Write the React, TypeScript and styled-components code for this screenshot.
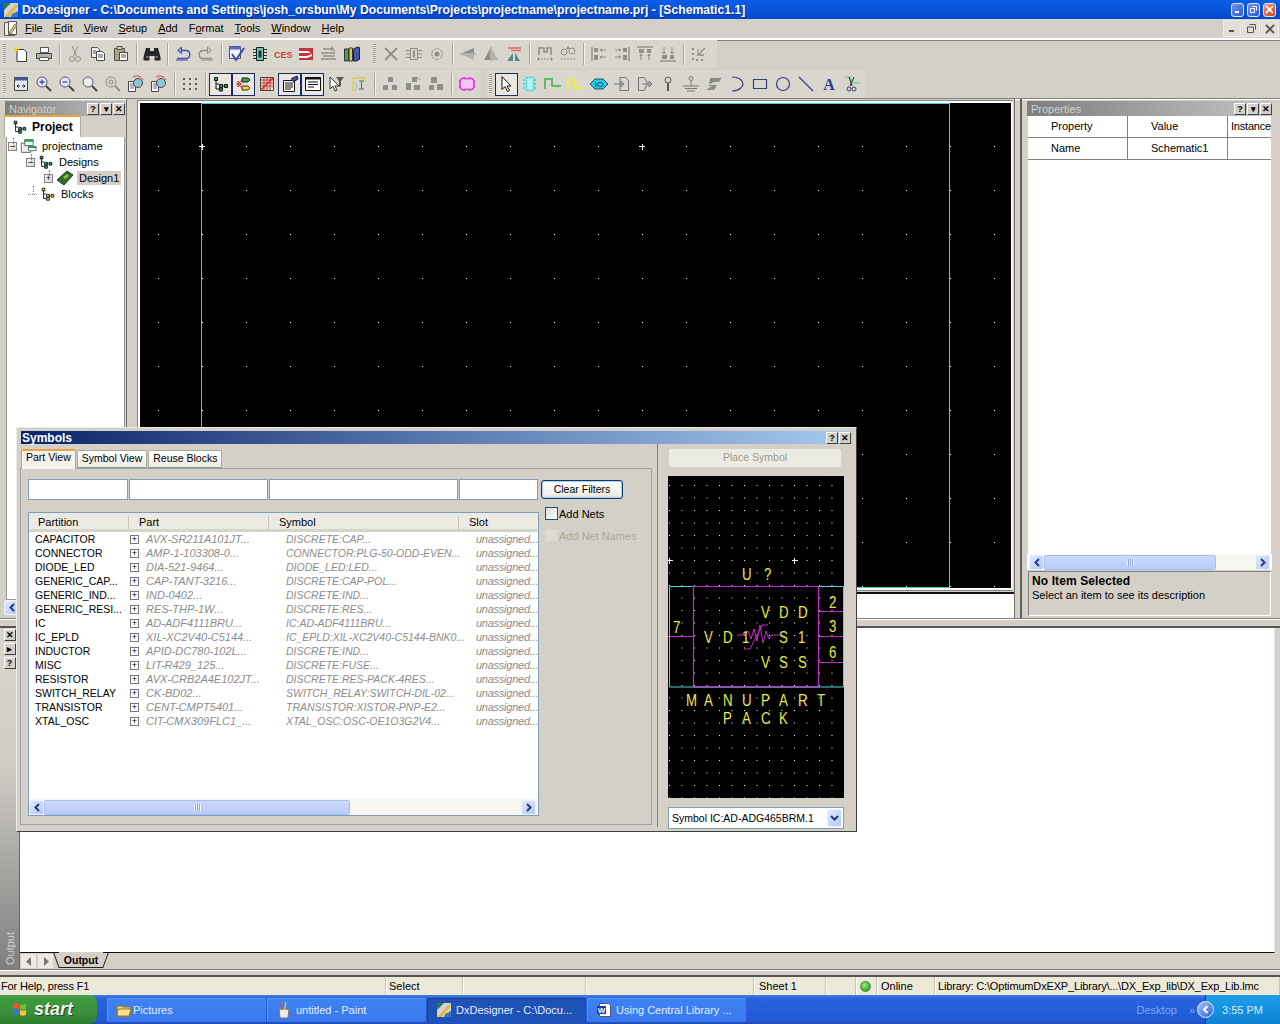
import React, { FC, ReactNode } from 'react';
import styled, { createGlobalStyle } from 'styled-components';

const GlobalStyle = createGlobalStyle`
  html, body { margin: 0; padding: 0; background: #d4d0c8; overflow: hidden; }
  * { box-sizing: border-box; }
  body { font-family: "Liberation Sans", Arial, sans-serif; font-size: 11px; color: #000; }
`;

const g = '#8e8e8a';

// toolbar icons, all drawn on an 18x18 box
const icons: Record<string, ReactNode> = {
  new: (<><path d="M5 4.5h7l2.5 2.5v9.5H5z" fill="#fff" stroke="#333" /><path d="M4 1l1 2.2 2.2 1-2.2 1L4 7.5l-1-2.3-2.2-1 2.2-1z" fill="#f3d21a" /></>),
  print: (<><path d="M5.5 2.5h8v5h-8z" fill="#fff" stroke="#555" /><path d="M1.5 8.5h15v5h-15z" fill="#b4b4b0" stroke="#444" /><path d="M4.5 12.5h9v3h-9z" fill="#fff" stroke="#555" /></>),
  cut: (<><path d="M6 1l4.5 10M12 1L7.5 11" stroke={g} fill="none" /><circle cx="6" cy="14" r="2.4" fill="none" stroke={g} /><circle cx="12" cy="14" r="2.4" fill="none" stroke={g} /></>),
  copy: (<><path d="M2.5 2.5h6l2 2v8h-8z" fill="#eee" stroke="#555" /><path d="M7.5 6.5h6l2 2v7h-8z" fill="#fff" stroke="#444" /><path d="M9 10h5M9 12h5M4 6h3M4 8h3" stroke="#555" /></>),
  paste: (<><path d="M2.5 3.5h10v12h-10z" fill="#a8a67c" stroke="#555" /><path d="M5 1.5h5v3H5z" fill="#ccc" stroke="#555" /><path d="M7.5 7.5h8v8h-8z" fill="#fff" stroke="#444" /><path d="M9 10h5M9 12h5" stroke="#555" /></>),
  binoc: (<><path d="M3 3h4v3h4V3h4l2.5 9v3.5h-6V11h-5v4.5h-6V12z" fill="#26262a" /><path d="M3 12h3M12 12h3" stroke="#aaa" /></>),
  undo: (<><path d="M3 13.5h9c5 0 5-8 0-8H7" stroke="#3f4fb5" strokeWidth="1.4" fill="none" /><path d="M7.5 2L3.5 5.5l4 3z" fill="#8fa0d8" stroke="#3f4fb5" /><path d="M2 15h12" stroke="#3f4fb5" /></>),
  redo: (<><path d="M15 13.5H6c-5 0-5-8 0-8h5" stroke={g} strokeWidth="1.4" fill="none" /><path d="M10.5 2l4 3.5-4 3z" fill="#ccc" stroke={g} /><path d="M4 15h12" stroke={g} /></>),
  check: (<><path d="M1.5 1.5h11v12h-11z" fill="#f4f4f4" stroke="#555" /><path d="M1.5 1.5h11v3h-11z" fill="#5566c8" /><path d="M4 9l4 6 8-12" stroke="#3a47b8" strokeWidth="2" fill="none" /></>),
  chip: (<><path d="M5.5 2.5h7v13h-7z" fill="#7fc7a0" stroke="#123" /><path d="M2 4.5h3M2 7.5h3M2 10.5h3M2 13.5h3M13 4.5h3M13 7.5h3M13 10.5h3M13 13.5h3" stroke="#234" /><path d="M7.5 5.5h3v7h-3z" fill="#234" /></>),
  ces: (<text x="0" y="13" fontSize="9" fontWeight="700" fill="#d93a3a" fontFamily="Liberation Sans">CES</text>),
  red: (<><path d="M2 3h14v12H2z" fill="#c8303a" /><path d="M2 6h9l3 2H2M2 11h8l5-2v2l-5 2H2" fill="#fff" /></>),
  lines: (<><path d="M3 4h9l3 2M1 8h14M3 11h12M1 14h15" stroke={g} strokeWidth="1.3" fill="none" /><path d="M11 1l3 3-3 2z" fill={g} /></>),
  books: (<><path d="M1.5 4h4v12h-4z" fill="#4b9d63" stroke="#333" /><path d="M6 3h3.5v13H6z" fill="#d8cb4d" stroke="#333" /><path d="M10.5 4l4-2 2 .5v12l-3 1.5h-3z" fill="#4a55a8" stroke="#223" /></>),
  x: (<path d="M3 3l12 12M15 3L3 15" stroke={g} strokeWidth="1.8" />),
  chipg: (<><path d="M5.5 3.5h7v11h-7z" fill="#d8d5cd" stroke={g} /><path d="M1 5.5h4M1 9h4M1 12.5h4M13 5.5h4M13 9h4M13 12.5h4" stroke={g} /><path d="M8 5.5h2v7H8z" fill={g} /></>),
  rot: (<><path d="M4 6l5-3 5 3v6l-5 3-5-3z" fill="none" stroke={g} strokeDasharray="2 1" /><circle cx="9" cy="9" r="2.5" fill={g} /></>),
  flipv: (<><path d="M1 9h16" stroke={g} /><path d="M3 8l12-5v5z" fill={g} /><path d="M3 10l12 5v-5z" fill="#b4b4ae" /></>),
  fliph: (<><path d="M9 2v14" stroke={g} /><path d="M8 15V4L2 15z" fill={g} /><path d="M10 15V4l6 11z" fill="#b4b4ae" /></>),
  flipx: (<><path d="M3 3h13M6 5.5h10" stroke="#d66" strokeWidth="1.4" /><path d="M8 16V8l-6 8z" fill="#4a8f82" /><path d="M10 16V8l5 8z" fill="#4a8f82" /></>),
  wire1: (<><path d="M3 10V3h5v4h3V3h4v7" stroke={g} strokeWidth="1.6" fill="none" /><path d="M2 14h14" stroke={g} strokeDasharray="2 1" /><path d="M1 14l2-2v4zM17 14l-2-2v4z" fill={g} /></>),
  wire2: (<><circle cx="5" cy="7" r="3" fill="none" stroke={g} /><circle cx="13" cy="6" r="3" fill="none" stroke={g} /><path d="M2 14h14" stroke={g} strokeDasharray="2 1" /><path d="M9 1l2 3H7z" fill={g} /></>),
  algl: (<><path d="M2 2v14" stroke={g} strokeWidth="1.4" /><path d="M4 3h4v4H4zM4 10h4v5H4z" fill={g} /><path d="M10 5h6M10 12h6" stroke={g} /><path d="M10 5l2-2v4zM10 12l2-2v4z" fill={g} /></>),
  algr: (<><path d="M16 2v14" stroke={g} strokeWidth="1.4" /><path d="M10 3h4v4h-4zM10 10h4v5h-4z" fill={g} /><path d="M2 5h6M2 12h6" stroke={g} /><path d="M8 5L6 3v4zM8 12l-2-2v4z" fill={g} /></>),
  algt: (<><path d="M1 2h16" stroke={g} strokeWidth="1.4" /><path d="M3 4h5v4H3zM11 4h4v4h-4z" fill={g} /><path d="M5 9v6M13 9v6" stroke={g} /><path d="M5 9l-2 2h4zM13 9l-2 2h4z" fill={g} /></>),
  algb: (<><path d="M1 16h16" stroke={g} strokeWidth="1.4" /><path d="M3 10h5v4H3zM11 10h4v4h-4z" fill={g} /><path d="M5 2v7M13 2v7" stroke={g} /><path d="M5 9L3 7h4zM13 9l-2-2h4z" fill={g} /></>),
  collapse: (<><path d="M3 3v2M3 8v2M3 13v2M6 15h2M11 15h2" stroke={g} strokeWidth="2" /><path d="M15 3L8 10h6" stroke={g} fill="none" strokeWidth="1.4" /><path d="M8 4v6" stroke={g} /></>),
  fit: (<><path d="M2.5 2.5h13v13h-13z" fill="#e6e8f0" stroke="#444" /><path d="M2.5 2.5h13v3h-13z" fill="#4a5a9c" /><path d="M5 11h3M5 11l1.5-1.5M5 11l1.5 1.5M13 11h-3M13 11l-1.5-1.5M13 11l-1.5 1.5" stroke="#222" /></>),
  zoomin: (<><circle cx="7" cy="7" r="5" fill="#e6e8f5" stroke="#556" /><path d="M4.5 7h5M7 4.5v5" stroke="#3a49b0" strokeWidth="1.3" /><path d="M11 11l5 5" stroke="#444" strokeWidth="2" /></>),
  zoomout: (<><circle cx="7" cy="7" r="5" fill="#e6e8f5" stroke="#556" /><path d="M4.5 7h5" stroke="#3a49b0" strokeWidth="1.3" /><path d="M11 11l5 5" stroke="#444" strokeWidth="2" /></>),
  zoom: (<><circle cx="7" cy="7" r="5" fill="#eee" stroke="#556" /><path d="M11 11l5 5" stroke="#444" strokeWidth="2" /></>),
  zoomsel: (<><circle cx="7" cy="7" r="5" fill="none" stroke={g} /><circle cx="7" cy="7" r="2" fill="none" stroke={g} /><path d="M11 11l5 5" stroke={g} strokeWidth="2" /></>),
  dmag: (<><path d="M1.5 6.5h7v10h-7z" fill="#fff" stroke="#445" /><path d="M3 9h4M3 11h4M3 13h4" stroke="#667" /><circle cx="11" cy="8" r="4.5" fill="#8fc6cf" stroke="#445" /><path d="M6 2c4-2 8-1 10 3" stroke="#c44" fill="none" /></>),
  grid: (<><path d="M2 3h2v2H2zM8 3h2v2H8zM14 3h2v2h-2zM2 8h2v2H2zM8 8h2v2H8zM14 8h2v2h-2zM2 13h2v2H2zM8 13h2v2H8zM14 13h2v2h-2z" fill="#5e5e5e" /></>),
  tree: (<><path d="M2.5 2.5h3v3h-3zM7.5 9.5h3v3h-3zM12.5 9.5h3v3h-3zM7.5 13h3v3h-3z" fill="#2f9f80" stroke="#111" /><path d="M4 5v9h3M4 9h3M10 11h2" stroke="#111" fill="none" /></>),
  blocks: (<><path d="M2.5 2.5h3v3h-3zM7.5 9.5h3v3h-3zM12.5 9.5h3v3h-3zM7.5 13h3v3h-3z" fill="#e8e040" stroke="#111" /><path d="M4 5v9h3M4 9h3M10 11h2" stroke="#111" fill="none" /></>),
  nets: (<><path d="M7 3h6l2 2-2 2H7z" fill="#3ea34a" stroke="#123" /><path d="M7 11h6l2 2-2 2H7z" fill="#e8d838" stroke="#431" /><path d="M1 9h6M3 6l3 3-3 3zM7 5L3 9M7 13L3 9" stroke="#b33" fill="none" /></>),
  redchip: (<><path d="M2.5 2.5h13v13h-13z" fill="#e8e2dc" stroke="#444" /><path d="M3 5h12M3 8h12M3 11h12M6 3v12M9 3v12M12 3v12" stroke="#c33" /><path d="M3 15L15 3" stroke="#c33" strokeWidth="1.6" /></>),
  props: (<><path d="M2.5 5.5h11v11h-11z" fill="#fff" stroke="#111" /><path d="M4 8h8M4 10h8M4 12h8M4 14h6" stroke="#111" /><path d="M10 4l6-3 1 3-5 3" fill="#4a55a8" stroke="#111" /></>),
  panel: (<><path d="M1.5 2.5h15v13h-15z" fill="#fff" stroke="#111" /><path d="M1.5 2.5h15v2h-15z" fill="#111" /><path d="M4 7h10M4 9.5h10M4 12h6" stroke="#111" /></>),
  filter: (<><path d="M3 2v12l3-3 2 5 2-1-2-4h4z" fill="#fff" stroke="#333" /><path d="M9 2h8l-3 4v5l-2 1V6z" fill="#555" /></>),
  ibeam: (<><path d="M3 3h12v3M3 3v12h3" stroke="#e0cd62" strokeWidth="1.8" fill="none" /><path d="M5 7c2 3 2 5 1 8" stroke="#7ac9c9" fill="none" /><path d="M9 6h5M9 14h5M11.5 6v8" stroke="#3c7a5a" /></>),
  grp1: (<path d="M7 2h5v5H7zM2 10h5v5H2zM11 10h5v5h-5z" fill={g} />),
  grp2: (<><path d="M8 2h5v5H8zM2 8h5v7H2zM10 10h6v5h-6z" fill={g} /><path d="M13 2l3 3" stroke={g} /></>),
  grp3: (<path d="M4 2h6v6H4zM2 10h5v5H2zM10 9h6v6h-6z" fill={g} />),
  magchip: (<path d="M4 3.5h10l2 2v7l-2 2H4l-2-2v-7zM1 6h2M1 11h2M15 6h2M15 11h2M6 2v2M12 2v2M6 14v2M12 14v2" fill="#f3c4f3" stroke="#e838d8" strokeWidth="1.6" />),
  arrow: (<path d="M4 1.5v13l3-3 2.5 5 2-1-2.5-4.5h4z" fill="#fff" stroke="#111" />),
  cychip: (<path d="M5.5 2.5h7v13h-7zM2 5h3M2 9h3M2 13h3M13 5h3M13 9h3M13 13h3" fill="#b8f2f2" stroke="#2fd0d8" strokeWidth="1.4" strokeDasharray="2 1" />),
  grn: (<path d="M1 14V4h7v7h9" fill="none" stroke="#5cbc6c" strokeWidth="2" />),
  yel: (<path d="M1 15V5h7v8h9" fill="none" stroke="#ecec4c" strokeWidth="2.4" />),
  eye: (<><path d="M0 9l5-5h8l5 5-5 5H5z" fill="#2fc8e0" stroke="#155" /><text x="9" y="12" fontSize="8" textAnchor="middle" fill="#124" fontFamily="Liberation Sans">IO</text></>),
  portin: (<><path d="M7 2.5h6l2.5 3v10H7z" fill="none" stroke="#777" /><path d="M1 9h10M8 6l3 3-3 3z" stroke="#777" fill="none" /></>),
  portout: (<><path d="M2.5 2.5h6l3 6-3 7h-6z" fill="none" stroke="#777" /><path d="M6 9h10M13 6l3 3-3 3z" stroke="#777" fill="none" /></>),
  pin: (<><circle cx="9" cy="5" r="3" fill="none" stroke="#555" /><path d="M9 8v8" stroke="#555" strokeWidth="2" /></>),
  ground: (<><circle cx="9" cy="3.5" r="2" fill="none" stroke="#777" /><path d="M9 5.5V11M1 11h16M3 13.5h12M5 16h8" stroke="#777" /></>),
  stack: (<path d="M5 3h10l2-1-3 5H9l-6 3h9l-3 5H1l6-4H4z" fill="#8a8a86" />),
  arc: (<path d="M4 2c9 0 11 5 11 7s-3 7-11 7" fill="none" stroke="#3b3f78" strokeWidth="1.2" />),
  rect: (<path d="M2.5 4.5h13v9h-13z" fill="none" stroke="#3b3f78" strokeWidth="1.2" />),
  circle: (<circle cx="9" cy="9" r="6.5" fill="none" stroke="#3b3f78" strokeWidth="1.2" />),
  line: (<path d="M2 2l14 14" stroke="#3b3f78" strokeWidth="1.2" />),
  letter: (<text x="9" y="15" fontSize="16" fontWeight="700" textAnchor="middle" fill="#2f3a96" fontFamily="Liberation Serif">A</text>),
  scissors: (<><path d="M2 2h5v3h3v3h7" stroke="#8fd09a" strokeWidth="1.6" fill="none" /><path d="M6 2l3 9M11 2L7 11" stroke="#333" /><circle cx="6" cy="14" r="2" fill="none" stroke="#3b3f78" /><circle cx="11" cy="14" r="2" fill="none" stroke="#3b3f78" /></>),
};

const Icon: FC<{ name: string; size?: number }> = ({ name, size = 18 }) => (
  <svg width={size} height={size} viewBox="0 0 18 18">{icons[name]}</svg>
);

const Screen = styled.div`
  position: relative;
  width: 1280px;
  height: 1024px;
  display: flex;
  flex-direction: column;
  overflow: hidden;
  background: #d4d0c8;
`;

const TitleBar = styled.div`
  height: 19px;
  flex: none;
  display: flex;
  align-items: center;
  padding-left: 3px;
  gap: 3px;
  background: linear-gradient(#0a5fe8 0, #0854dc 50%, #0348c8 100%);
  color: #fff;
  font-size: 12.2px;
  font-weight: 700;
  white-space: nowrap;
`;

const TitleText = styled.span`
  flex: 1;
  text-shadow: 1px 1px 0 #0a2c8c;
`;

const WinButtons = styled.div`
  display: flex;
  gap: 3px;
  padding-right: 4px;
`;

const WinBtn = styled.div<{ $close?: boolean }>`
  width: 13px;
  height: 14px;
  border: 1px solid #dfe8ff;
  border-radius: 3px;
  display: flex;
  align-items: center;
  justify-content: center;
  background: ${({ $close }) =>
    $close ? 'linear-gradient(135deg, #f09a7c, #d0401c)' : 'linear-gradient(135deg, #6f97ee, #2a58d8)'};
`;

const MenuBar = styled.div`
  height: 21px;
  flex: none;
  display: flex;
  align-items: flex-start;
  padding: 1px 0 0 2px;
  border-bottom: 2px solid #fff;
  box-shadow: 0 1px 0 #808080;
`;

const MenuItems = styled.div`
  flex: 1;
  display: flex;
  padding-left: 5px;
  gap: 11px;
  font-size: 11px;
  line-height: 17px;
  u { text-decoration: underline; }
`;

const MdiButtons = styled.div`
  display: flex;
  gap: 1px;
  margin-right: 1px;
`;

const MdiBtn = styled.div`
  width: 18px;
  height: 17px;
  background: #e2dfd8;
  border: 1px solid #efede8;
  display: flex;
  align-items: center;
  justify-content: center;
`;

const ToolRow = styled.div<{ $h: number }>`
  height: ${({ $h }) => $h}px;
  flex: none;
  display: flex;
  align-items: flex-start;
`;

const ToolGroup = styled.div<{ $left?: number }>`
  height: 28px;
  display: flex;
  align-items: center;
  padding: 0 2px;
  margin-left: ${({ $left }) => $left ?? 0}px;
  background: #d9d6ce;
`;

const Grip = styled.div`
  width: 3px;
  height: 20px;
  margin: 0 3px 0 1px;
  background: repeating-linear-gradient(#9a988f 0 1px, #ece9e2 1px 2px);
`;

const GroupGap = styled.div<{ $w: number }>`
  width: ${({ $w }) => $w}px;
  flex: none;
`;

const ToolBtn = styled.div<{ $pressed?: boolean }>`
  width: 23px;
  height: 23px;
  display: flex;
  align-items: center;
  justify-content: center;
  border: 1px solid ${({ $pressed }) => ($pressed ? '#1c2a66' : 'transparent')};
  background: ${({ $pressed }) => ($pressed ? '#e9e7e0' : 'transparent')};
`;

const ToolSep = styled.div`
  width: 1px;
  height: 22px;
  margin: 0 3px 0 4px;
  background: #a8a59c;
  box-shadow: 1px 0 0 #f4f3ef;
`;

const T: FC<{ n: string; p?: boolean }> = ({ n, p }) => (
  <ToolBtn $pressed={p}>
    <Icon name={n} />
  </ToolBtn>
);

const Main = styled.div`
  height: 520px;
  flex: none;
  display: flex;
  border-top: 1px solid #808080;
  box-shadow: inset 0 1px 0 #fff;
`;

const Navigator = styled.div`
  width: 127px;
  flex: none;
  display: flex;
  flex-direction: column;
  padding: 2px 1px 0 5px;
  border-right: 1px solid #6f6f6f;
`;

const PanelTitle = styled.div`
  height: 15px;
  flex: none;
  display: flex;
  align-items: center;
  padding: 0 0 0 4px;
  color: #d0d0d0;
  font-size: 11px;
  background: linear-gradient(90deg, #7e7e7e, #c4c4c4);
`;

const PanelTitleText = styled.span`
  flex: 1;
`;

const CapBtn = styled.div`
  width: 12px;
  height: 12px;
  margin-left: 1px;
  border: 1px solid;
  border-color: #fff #404040 #404040 #fff;
  background: #d4d0c8;
  color: #000;
  font-size: 9px;
  font-weight: 700;
  line-height: 10px;
  text-align: center;
  display: flex;
  align-items: center;
  justify-content: center;
`;

const ProjectTab = styled.div`
  width: 77px;
  height: 22px;
  margin: -1px 0 0 -1px;
  display: flex;
  align-items: center;
  gap: 4px;
  padding-left: 7px;
  background: #fff;
  border-top: 2px solid #e8a33c;
  border-left: 1px solid #aaa;
  border-right: 1px solid #aaa;
  font-weight: 700;
  font-size: 12px;
`;

const TreeBox = styled.div`
  flex: 1;
  width: 119px;
  margin-left: 1px;
  background: #fff;
  border: 1px solid #9a9a9a;
  border-top: 0;
  display: flex;
  flex-direction: column;
  padding-top: 1px;
`;

const TreeRow = styled.div<{ $indent: number }>`
  position: relative;
  height: 16px;
  display: flex;
  align-items: center;
  padding-left: ${({ $indent }) => $indent}px;
  gap: 3px;
  white-space: nowrap;
  &::before {
    content: '';
    position: absolute;
    left: ${({ $indent }) => $indent + 5}px;
    top: 0;
    width: 0;
    height: 8px;
    border-left: 1px dotted #808080;
  }
`;

const TreeLabel = styled.span<{ $selected?: boolean }>`
  padding: 1px 2px;
  background: ${({ $selected }) => ($selected ? '#d4d0c8' : 'transparent')};
`;

const Expander = styled.span`
  width: 9px;
  height: 9px;
  flex: none;
  border: 1px solid #848484;
  background: linear-gradient(135deg, #fff, #d8d4c8);
  font-size: 9px;
  line-height: 6px;
  text-align: center;
  color: #000;
`;

const TreeStub = styled.span`
  width: 9px;
  flex: none;
  border-bottom: 1px dotted #808080;
`;

const NavScroll = styled.div`
  height: 18px;
  margin-left: -3px;
  padding-left: 2px;
`;

const MidColumn = styled.div`
  width: 888px;
  flex: none;
  display: flex;
  flex-direction: column;
  padding: 1px 1px 0 10px;
  border-right: 1px solid #707070;
  background: #d4d0c8;
`;

const CanvasFrame = styled.div`
  height: 491px;
  flex: none;
  padding: 2px;
  background: #fff;
  border: 1px solid #808080;
  border-right-color: #eee;
  svg { display: block; background: #000; }
`;

const BelowCanvas = styled.div`
  flex: 1;
  margin-top: 1px;
  margin-right: -1px;
  background: #fff;
  border-top: 2px solid #111;
`;

const Properties = styled.div`
  flex: 1;
  display: flex;
  flex-direction: column;
  margin-left: 5px;
  padding: 2px 8px 2px 5px;
  border-left: 2px solid #606060;
`;

const PropGrid = styled.div`
  flex: 1;
  margin: 0 1px;
  background: #fff;
`;

const PropRow = styled.div`
  display: flex;
  height: 22px;
  border-bottom: 1px solid #808080;
`;

const PropCell = styled.div<{ $w?: number; $pad: number }>`
  width: ${({ $w }) => ($w ? `${$w}px` : 'auto')};
  flex: ${({ $w }) => ($w ? 'none' : '1')};
  padding-left: ${({ $pad }) => $pad}px;
  line-height: 21px;
  letter-spacing: ${({ $w }) => ($w ? '0' : '-0.2px')};
  border-right: ${({ $w }) => ($w ? '1px solid #808080' : '0')};
  white-space: nowrap;
`;

const PropScroll = styled.div`
  flex: none;
  padding: 0 2px;
  background: #fff;
`;

const Scrollbar = styled.div`
  height: 16px;
  display: flex;
  align-items: center;
  background: #f7f6f1;
  flex: none;
`;

const ScrollArrow = styled.div`
  width: 15px;
  height: 15px;
  flex: none;
  border: 1px solid #eef2ff;
  border-radius: 2px;
  background: linear-gradient(135deg, #e0e8ff, #b4c8f6);
  display: flex;
  align-items: center;
  justify-content: center;
`;

const ScrollTrack = styled.div`
  flex: 1;
  height: 100%;
  display: flex;
  align-items: center;
`;

const ScrollThumb = styled.div`
  height: 15px;
  border: 1px solid #a8bef0;
  border-radius: 2px;
  background: linear-gradient(#cbd9fb, #b8ccf8);
  display: flex;
  align-items: center;
  justify-content: center;
`;

const ThumbGrip = styled.div`
  width: 7px;
  height: 7px;
  background: repeating-linear-gradient(90deg, #eef3ff 0 1px, #8ca6e0 1px 2px);
`;

const Chevron: FC<{ right?: boolean }> = ({ right }) => (
  <svg width="8" height="9" viewBox="0 0 8 9">
    <path d={right ? 'M2 1l3.5 3.5L2 8' : 'M6 1L2.5 4.5 6 8'} fill="none" stroke="#24397e" strokeWidth="2" />
  </svg>
);

const HScroll: FC<{ thumb: number }> = ({ thumb }) => (
  <Scrollbar>
    <ScrollArrow><Chevron /></ScrollArrow>
    <ScrollTrack>
      <ScrollThumb style={{ width: thumb }}><ThumbGrip /></ScrollThumb>
    </ScrollTrack>
    <ScrollArrow><Chevron right /></ScrollArrow>
  </Scrollbar>
);

const DescBox = styled.div`
  height: 45px;
  margin: 1px 1px 0;
  padding: 3px 3px;
  border: 1px solid;
  border-color: #808080 #fff #fff #808080;
  line-height: 14px;
  b { display: block; font-size: 12px; line-height: 13px; letter-spacing: 0.1px; }
`;

const HSplit = styled.div<{ $h: number }>`
  height: ${({ $h }) => $h}px;
  flex: none;
  border-top: 1px solid #808080;
  border-bottom: 2px solid #555;
  box-shadow: inset 0 1px 0 #fff;
`;

const OutputPane = styled.div`
  height: 341px;
  flex: none;
  display: flex;
`;

const OutputRail = styled.div`
  width: 20px;
  display: flex;
  flex-direction: column;
  align-items: center;
  gap: 1px;
  background: linear-gradient(#d8d5cd 0, #d0cdc6 40%, #7f7f7f 100%);
  border-right: 1px solid #666;
`;

const RailBtn = styled(CapBtn)`
  margin-top: 1px;
  margin-left: 0;
  flex: none;
`;

const RailTitle = styled.div`
  margin-top: auto;
  margin-bottom: 4px;
  height: 44px;
  writing-mode: vertical-rl;
  transform: rotate(180deg);
  color: #d0d0d0;
  font-size: 11px;
  line-height: 20px;
  text-align: left;
`;

const OutputBody = styled.div`
  flex: 1;
  display: flex;
  flex-direction: column;
  padding-right: 5px;
`;

const OutputWhite = styled.div`
  flex: 1;
  background: #fff;
  border-right: 1px solid #e0e0e0;
  border-bottom: 1px solid #111;
`;

const TabStrip = styled.div`
  height: 16px;
  flex: none;
  display: flex;
  align-items: flex-start;
  padding-left: 1px;
  gap: 2px;
`;

const TabArrow = styled.div`
  width: 15px;
  height: 14px;
  margin-top: 1px;
  background: #ece9e2;
  display: flex;
  align-items: center;
  justify-content: center;
`;

const OutputTab = styled.div`
  position: relative;
  margin: -1px 0 0 4px;
  height: 16px;
  width: 44px;
  background: #d4d0c8;
  border-bottom: 1px solid #222;
  font-weight: 700;
  font-size: 10.5px;
  line-height: 17px;
  text-align: center;
  &::before, &::after {
    content: '';
    position: absolute;
    top: 1px;
    height: 15px;
    width: 1px;
    background: #222;
  }
  &::before { left: -3px; transform: skewX(20deg); }
  &::after { right: -3px; transform: skewX(-20deg); }
`;

const StatusBar = styled.div`
  height: 18px;
  flex: none;
  display: flex;
  background: #ece9d8;
  line-height: 17px;
  white-space: nowrap;
`;

const StatusCell = styled.div<{ $w?: number; $pad?: number; $tight?: boolean }>`
  width: ${({ $w }) => ($w ? `${$w}px` : 'auto')};
  flex: ${({ $w }) => ($w ? 'none' : '1')};
  padding-left: ${({ $pad }) => $pad ?? 3}px;
  letter-spacing: ${({ $tight }) => ($tight ? '-0.16px' : '0')};
  border-right: 1px solid #c8c5b4;
  box-shadow: 1px 0 0 #fff;
  display: flex;
  align-items: center;
`;

const Led = styled.span`
  width: 11px;
  height: 11px;
  border-radius: 50%;
  background: radial-gradient(circle at 40% 35%, #a4ec8c, #2fa51f 70%);
  border: 1px solid #4c8a3c;
`;

const Taskbar = styled.div`
  height: 29px;
  flex: none;
  display: flex;
  align-items: center;
  background: linear-gradient(#3f7fe8 0, #2a62dc 12%, #245edb 50%, #2458d0 90%, #1d4bb4 100%);
  color: #fff;
`;

const StartBtn = styled.div`
  width: 97px;
  height: 29px;
  display: flex;
  align-items: center;
  gap: 5px;
  padding-left: 11px;
  border-radius: 0 8px 8px 0;
  background: linear-gradient(#4e9e4e 0, #3a9a3a 15%, #3f8f3f 60%, #2c7a30 100%);
  font: italic 700 18px "Liberation Sans", sans-serif;
  color: #f0f0f0;
  text-shadow: 1px 1px 1px #1a4a1a;
`;

const TaskButtons = styled.div`
  flex: 1;
  display: flex;
  gap: 1px;
  padding-left: 10px;
  height: 100%;
  align-items: center;
`;

const TaskBtn = styled.div<{ $active?: boolean }>`
  width: 159px;
  height: 24px;
  display: flex;
  align-items: center;
  gap: 4px;
  padding-left: 9px;
  border-radius: 2px;
  font-size: 11px;
  color: #e6ecff;
  white-space: nowrap;
  background: ${({ $active }) => ($active ? '#1e52b7' : 'linear-gradient(#3d82f4, #3a78ec)')};
  box-shadow: ${({ $active }) => ($active ? 'inset 1px 1px 1px #143c8c' : 'inset 1px 1px 0 #5a96f8')};
`;

const TaskLabel = styled.span<{ $shift?: number }>`
  margin-left: ${({ $shift }) => $shift ?? 0}px;
`;

const TrayLead = styled.div`
  display: flex;
  align-items: center;
  gap: 12px;
  color: #7ea4ec;
  padding-right: 10px;
  font-size: 11px;
`;

const Tray = styled.div`
  width: 75px;
  height: 29px;
  display: flex;
  align-items: center;
  gap: 8px;
  background: linear-gradient(#1ea0e8, #1490e0 50%, #1180d0);
  border-left: 1px solid #0e3a9c;
  font-size: 11px;
  color: #d8eaff;
`;

const TrayChevron = styled.div`
  width: 17px;
  height: 17px;
  margin-left: -9px;
  border-radius: 50%;
  background: linear-gradient(135deg, #a4c4fc, #2a62dc);
  border: 1px solid #e8f0ff;
  display: flex;
  align-items: center;
  justify-content: center;
`;

const Dialog = styled.div`
  position: absolute;
  left: 16px;
  top: 427px;
  width: 841px;
  height: 405px;
  display: flex;
  flex-direction: column;
  padding: 3px 4px 4px;
  background: #d4d0c8;
  border: 1px solid;
  border-color: #eceae4 #404040 #404040 #eceae4;
`;

const DialogTitle = styled.div`
  height: 13px;
  flex: none;
  display: flex;
  align-items: center;
  padding: 0 1px;
  background: linear-gradient(90deg, #0a246a, #a6caf0);
  color: #fff;
  font-weight: 700;
  font-size: 12px;
`;

const DialogBody = styled.div`
  flex: 1;
  display: flex;
  min-height: 0;
`;

const LeftPane = styled.div`
  width: 638px;
  flex: none;
  margin-left: -1px;
  display: flex;
  flex-direction: column;
  border-right: 1px solid #808080;
  padding: 4px 5px 0 0;
`;

const TabRow = styled.div`
  display: flex;
  align-items: flex-end;
  height: 20px;
  flex: none;
  gap: 1px;
  margin-left: 1px;
`;

const DlgTab = styled.div<{ $active?: boolean }>`
  height: ${({ $active }) => ($active ? 20 : 18)}px;
  padding: 0 4px;
  font-size: 10.5px;
  line-height: ${({ $active }) => ($active ? 13 : 15)}px;
  border: 1px solid #aca899;
  border-bottom: ${({ $active }) => ($active ? '0' : '1px solid #919b9c')};
  border-top: ${({ $active }) => ($active ? '2px solid #e8a33c' : '1px solid #aca899')};
  border-radius: 2px 2px 0 0;
  background: ${({ $active }) => ($active ? '#f4f3ee' : 'linear-gradient(#fff, #ecebe3)')};
  position: relative;
  margin-bottom: ${({ $active }) => ($active ? '-1px' : '0')};
  white-space: nowrap;
`;

const TabPanel = styled.div`
  flex: 1;
  display: flex;
  flex-direction: column;
  padding: 10px 0 8px 7px;
  margin-bottom: 2px;
  border: 1px solid #9ca0a0;
  background: #d4d0c8;
`;

const FilterRow = styled.div`
  display: flex;
  align-items: center;
  height: 21px;
  flex: none;
`;

const FilterInput = styled.div<{ $w: number }>`
  width: ${({ $w }) => $w}px;
  height: 21px;
  flex: none;
  margin-right: 1px;
  background: #fff;
  border: 1px solid #7f9db9;
`;

const ClearBtn = styled.div`
  width: 82px;
  height: 19px;
  margin-left: 2px;
  border: 1px solid #003c74;
  border-radius: 3px;
  background: linear-gradient(#fff, #f0efe8 80%, #d8d4c8);
  box-shadow: inset 0 0 0 1px #b4cdf4;
  text-align: center;
  line-height: 17px;
  font-size: 10.5px;
`;

const TableRow = styled.div`
  flex: 1;
  display: flex;
  margin-top: 12px;
  min-height: 0;
`;

const SymbolTable = styled.div`
  width: 511px;
  flex: none;
  display: flex;
  flex-direction: column;
  background: #fff;
  border: 1px solid #7f9db9;
`;

const TableHead = styled.div`
  height: 19px;
  flex: none;
  display: grid;
  grid-template-columns: 100px 140px 190px 1fr;
  background: #ecebe3;
  border-bottom: 3px solid #d6d3c8;
`;

const HeadCell = styled.div<{ $pad: number }>`
  padding-left: ${({ $pad }) => $pad}px;
  line-height: 18px;
  position: relative;
  &:not(:last-child)::after {
    content: '';
    position: absolute;
    right: 0;
    top: 3px;
    bottom: 1px;
    width: 1px;
    background: #c8c5b8;
  }
`;

const TableRows = styled.div`
  flex: 1;
`;

const TableScroll = styled.div`
  flex: none;
  padding-right: 2px;
  background: #f7f6f1;
`;

const DataRow = styled.div`
  height: 14px;
  display: grid;
  grid-template-columns: 101px 10px 6px 140px 190px 1fr;
  line-height: 14px;
  white-space: nowrap;
`;

const PartName = styled.span`
  padding-left: 6px;
  font-size: 10.5px;
`;

const PlusBox = styled.span`
  width: 9px;
  height: 9px;
  margin-top: 3px;
  border: 1px solid #777;
  background: #fff;
  font-size: 9px;
  line-height: 6px;
  text-align: center;
`;

const ItalicCell = styled.span`
  font-style: italic;
  color: #8c8c8c;
`;

const SymbolCell = styled(ItalicCell)`
  font-size: 10.5px;
`;

const SlotCell = styled(ItalicCell)`
  letter-spacing: -0.25px;
`;

const SideOptions = styled.div`
  flex: 1;
  display: flex;
  flex-direction: column;
  margin-top: -5px;
  padding-left: 6px;
  gap: 9px;
`;

const CheckLine = styled.div<{ $disabled?: boolean }>`
  display: flex;
  align-items: center;
  gap: 1px;
  height: 13px;
  color: ${({ $disabled }) => ($disabled ? '#aca899' : '#000')};
`;

const CheckBox = styled.span<{ $disabled?: boolean }>`
  width: 13px;
  height: 13px;
  flex: none;
  border: 1px solid ${({ $disabled }) => ($disabled ? '#d8d5cc' : '#1c5180')};
  background: ${({ $disabled }) => ($disabled ? '#dcdad2' : 'linear-gradient(135deg, #dcdcd4, #fff)')};
`;

const RightPane = styled.div`
  flex: 1;
  display: flex;
  flex-direction: column;
  padding: 5px 0 2px 10px;
`;

const PlaceBtn = styled.div`
  width: 172px;
  height: 18px;
  margin-left: 1px;
  flex: none;
  border-radius: 2px;
  background: #ecebe3;
  color: #9c9a90;
  text-align: center;
  line-height: 17px;
  font-size: 10.5px;
`;

const Preview = styled.div`
  margin-top: 9px;
  height: 322px;
  flex: none;
  svg { display: block; background: #000; }
`;

const Combo = styled.div`
  margin-top: 9px;
  height: 22px;
  width: 176px;
  flex: none;
  display: flex;
  align-items: center;
  justify-content: space-between;
  padding: 0 1px 0 3px;
  background: #fff;
  border: 1px solid #7f9db9;
  font-size: 10.5px;
`;

const ComboArrow = styled(ScrollArrow)`
  width: 15px;
  height: 18px;
`;

const rows = [
  ['CAPACITOR', 'AVX-SR211A101JT...', 'DISCRETE:CAP...'],
  ['CONNECTOR', 'AMP-1-103308-0...', 'CONNECTOR:PLG-50-ODD-EVEN...'],
  ['DIODE_LED', 'DIA-521-9464...', 'DIODE_LED:LED...'],
  ['GENERIC_CAP...', 'CAP-TANT-3216...', 'DISCRETE:CAP-POL...'],
  ['GENERIC_IND...', 'IND-0402...', 'DISCRETE:IND...'],
  ['GENERIC_RESI...', 'RES-THP-1W...', 'DISCRETE:RES...'],
  ['IC', 'AD-ADF4111BRU...', 'IC:AD-ADF4111BRU...'],
  ['IC_EPLD', 'XIL-XC2V40-C5144...', 'IC_EPLD:XIL-XC2V40-C5144-BNK0...'],
  ['INDUCTOR', 'APID-DC780-102L...', 'DISCRETE:IND...'],
  ['MISC', 'LIT-R429_125...', 'DISCRETE:FUSE...'],
  ['RESISTOR', 'AVX-CRB2A4E102JT...', 'DISCRETE:RES-PACK-4RES...'],
  ['SWITCH_RELAY', 'CK-BD02...', 'SWITCH_RELAY:SWITCH-DIL-02...'],
  ['TRANSISTOR', 'CENT-CMPT5401...', 'TRANSISTOR:XISTOR-PNP-E2...'],
  ['XTAL_OSC', 'CIT-CMX309FLC1_...', 'XTAL_OSC:OSC-OE1O3G2V4...'],
];

const AppLogo: FC<{ size?: number }> = ({ size = 16 }) => (
  <svg width={size} height={size} viewBox="0 0 16 16">
    <rect x="1" y="1" width="14" height="14" fill="#cfd6dc" />
    <path d="M1 15L13 2l2 2-9 11z" fill="#f0b43c" />
    <path d="M9 12l6-3v6H8z" fill="#3a78b8" />
    <path d="M1 1h7L1 8z" fill="#2f7a3a" />
  </svg>
);

const MultiDoc = () => (
  <svg width="18" height="18" viewBox="0 0 18 18">
    <path d="M2.5 2.5h10v13h-10z" fill="#f2efd8" stroke="#555" />
    <path d="M6.5 1.5h8v13h-8z" fill="#fff" stroke="#555" />
    <path d="M7 13l6-9 2 1-6 9z" fill="#d8d050" stroke="#776" />
  </svg>
);

const ProjectIcon = () => (
  <svg width="17" height="16" viewBox="0 0 20 18">
    <path d="M1.5 5.5h11v11h-11z" fill="#eee" stroke="#555" />
    <path d="M5.5 1.5h10v7h-10z" fill="#fff" stroke="#555" />
    <path d="M5.5 1.5h10v2.5h-10z" fill="#19a84a" />
    <path d="M10 9.5h9v5h-9z" fill="#fff" stroke="#555" />
    <path d="M10 9.5h9v2h-9z" fill="#19a84a" />
  </svg>
);

const DesignIcon = () => (
  <svg width="18" height="16" viewBox="0 0 18 16">
    <path d="M1 10L11 1l6 4-9 10z" fill="#2d6d2d" stroke="#143" />
    <path d="M7 7l4-3 2 2-4 3z" fill="#a8b838" />
  </svg>
);

const XpFlag = () => (
  <svg width="18" height="18" viewBox="0 0 18 18">
    <path d="M2 3c2-1 4-1 6 0v5c-2-1-4-1-6 0z" fill="#e8562c" />
    <path d="M9 3c2 1 4 1 6 0v5c-2 1-4 1-6 0z" fill="#6cc23c" />
    <path d="M2 9c2-1 4-1 6 0v5c-2-1-4-1-6 0z" fill="#3a78e0" />
    <path d="M9 9c2 1 4 1 6 0v5c-2 1-4 1-6 0z" fill="#f4c826" />
  </svg>
);

const FolderIcon = () => (
  <svg width="16" height="16" viewBox="0 0 16 16">
    <path d="M1 4h5l1 1h7v9H1z" fill="#f0d070" stroke="#9a7a20" />
    <path d="M2 7h13l-2 7H1z" fill="#f8e08c" stroke="#9a7a20" />
  </svg>
);

const PaintIcon = () => (
  <svg width="16" height="18" viewBox="0 0 16 18">
    <path d="M3 8h10l-1 9H4z" fill="#e8e8f0" stroke="#776" />
    <path d="M5 9L4 1h1.5l1 8z" fill="#e0503c" />
    <path d="M8 9l1-8h1.5l-1 8z" fill="#e8c030" />
    <path d="M10 9l2-6h1l-1.5 6z" fill="#3a8ad0" />
  </svg>
);

const WordIcon = () => (
  <svg width="16" height="16" viewBox="0 0 16 16">
    <path d="M3.5 1.5h9l2 2v11h-11z" fill="#fff" stroke="#556" />
    <path d="M1 4h9v8H1z" fill="#1c3a9c" />
    <text x="5.5" y="10.5" fontSize="8" fontWeight="700" fill="#fff" textAnchor="middle" fontFamily="Liberation Sans">W</text>
  </svg>
);

// the drawing sheet: grid of white dots and the cyan page frame
const SheetCanvas = () => (
  <svg width="871" height="485" viewBox="0 0 871 485" shapeRendering="crispEdges">
    <defs>
      <pattern id="sheetDots" x="18" y="43" width="44" height="44" patternUnits="userSpaceOnUse">
        <rect width="1" height="1" fill="#fff" />
      </pattern>
    </defs>
    <rect width="871" height="485" fill="url(#sheetDots)" />
    <path d="M61.5 0V484.5H809.5V0M61 0.5H810" fill="none" stroke="#48d0d0" />
    <path d="M59 43.5h6M62 41v6M499 43.5h6M502.5 41v6" stroke="#fff" />
  </svg>
);

const symM = '#c030c8';
const NARROW = 0.78;

// letters of the symbol font are tall and narrow, so squeeze them and spread by hand
const SymText: FC<{ x: number[]; y: number; children: string }> = ({ x, y, children }) => (
  <text
    transform={`scale(${NARROW} 1)`}
    x={x.map((v) => v / NARROW).join(' ')}
    y={y}
    fill="#e8e84c"
    fontFamily='"Liberation Sans", sans-serif'
    fontSize="17"
  >
    {children}
  </text>
);

// symbol preview. offsets are relative to the preview's top-left corner
const SymbolPreview = () => (
  <svg width="176" height="322" viewBox="0 0 176 322">
    <defs>
      <pattern id="symDots" x="1" y="9" width="12.5" height="12.5" patternUnits="userSpaceOnUse">
        <rect width="1" height="1" fill="#fff" />
      </pattern>
    </defs>
    <rect width="176" height="322" fill="url(#symDots)" />
    <path d="M-1 84.5h6M1.5 82v6M124 84.5h6M126.5 82v6" stroke="#fff" />
    <path d="M25.5 110.5H150.5V211H25.5zM0 160.5h25M150 135.5h25M150 160.5h25M150 186.5h25" fill="none" stroke={symM} strokeWidth="1.2" />
    <path d="M1.5 110.5H175.5V211H1.5z" fill="none" stroke="#50d8d8" />
    <path d="M24.5 110.5h127M24.5 211h127" stroke={symM} strokeWidth="1.2" />
    <path d="M69 159h8l3-4 3 8 3-10 3 12 3-16 3 18 3-12 3 8 3-4h8M76 173h6l12-24h6" fill="none" stroke={symM} />
    <SymText x={[74, 96]} y={104}>U?</SymText>
    <SymText x={[93, 111, 130]} y={142}>VDD</SymText>
    <SymText x={[36, 55, 74, 111, 130]} y={167}>VD1S1</SymText>
    <SymText x={[93, 111, 130]} y={192}>VSS</SymText>
    <SymText x={[5]} y={157}>7</SymText>
    <SymText x={[161]} y={132}>2</SymText>
    <SymText x={[161]} y={156}>3</SymText>
    <SymText x={[161]} y={182}>6</SymText>
    <SymText x={[18, 36, 55, 74, 93, 111, 130, 149]} y={230}>MANUPART</SymText>
    <SymText x={[55, 74, 93, 111]} y={248}>PACK</SymText>
  </svg>
);

const App: FC = () => (
  <Screen>
    <GlobalStyle />
    <TitleBar>
      <AppLogo />
      <TitleText>
        DxDesigner - C:\Documents and Settings\josh_orsbun\My Documents\Projects\projectname\projectname.prj - [Schematic1.1]
      </TitleText>
      <WinButtons>
        <WinBtn><svg width="8" height="8"><path d="M1 6h4" stroke="#fff" strokeWidth="2" /></svg></WinBtn>
        <WinBtn><svg width="9" height="9"><path d="M3.5 1.5h4v4M1.5 3.5h4v4h-4z" fill="none" stroke="#fff" /></svg></WinBtn>
        <WinBtn $close><svg width="9" height="9"><path d="M1 1l7 7M8 1L1 8" stroke="#fff" strokeWidth="1.6" /></svg></WinBtn>
      </WinButtons>
    </TitleBar>

    <MenuBar>
      <MultiDoc />
      <MenuItems>
        <span><u>F</u>ile</span>
        <span><u>E</u>dit</span>
        <span><u>V</u>iew</span>
        <span><u>S</u>etup</span>
        <span><u>A</u>dd</span>
        <span>F<u>o</u>rmat</span>
        <span><u>T</u>ools</span>
        <span><u>W</u>indow</span>
        <span><u>H</u>elp</span>
      </MenuItems>
      <MdiButtons>
        <MdiBtn><svg width="9" height="9"><path d="M1 7h5" stroke="#555" strokeWidth="2" /></svg></MdiBtn>
        <MdiBtn><svg width="11" height="11"><path d="M3.5 1.5h6v5M1.5 4h6v5.5h-6z" fill="none" stroke="#555" /></svg></MdiBtn>
        <MdiBtn><svg width="10" height="10"><path d="M1 1l8 8M9 1L1 9" stroke="#555" strokeWidth="1.8" /></svg></MdiBtn>
      </MdiButtons>
    </MenuBar>

    <ToolRow $h={30}>
      <ToolGroup>
        <Grip />
        <T n="new" /><T n="print" /><ToolSep />
        <T n="cut" /><T n="copy" /><T n="paste" /><ToolSep />
        <T n="binoc" /><ToolSep />
        <T n="undo" /><T n="redo" /><ToolSep />
        <T n="check" /><T n="chip" /><T n="ces" /><T n="red" /><T n="lines" /><T n="books" />
        <GroupGap $w={9} />
        <Grip />
        <T n="x" /><T n="chipg" /><T n="rot" /><ToolSep />
        <T n="flipv" /><T n="fliph" /><T n="flipx" /><ToolSep />
        <T n="wire1" /><T n="wire2" /><ToolSep />
        <T n="algl" /><T n="algr" /><T n="algt" /><T n="algb" /><ToolSep />
        <T n="collapse" />
        <GroupGap $w={5} />
      </ToolGroup>
    </ToolRow>

    <ToolRow $h={28}>
      <ToolGroup>
        <Grip />
        <T n="fit" /><T n="zoomin" /><T n="zoomout" /><T n="zoom" /><T n="zoomsel" /><T n="dmag" /><T n="dmag" /><ToolSep />
        <T n="grid" /><ToolSep />
        <T n="tree" p /><T n="nets" p /><T n="redchip" /><T n="props" p /><T n="panel" p /><T n="filter" /><T n="ibeam" /><ToolSep />
        <T n="grp1" /><T n="grp2" /><T n="grp3" /><ToolSep />
        <T n="magchip" />
      </ToolGroup>
      <ToolGroup $left={6}>
        <Grip />
        <T n="arrow" p /><T n="cychip" /><T n="grn" /><T n="yel" /><T n="eye" /><T n="portin" /><T n="portout" /><T n="pin" /><T n="ground" /><T n="stack" /><T n="arc" /><T n="rect" /><T n="circle" /><T n="line" /><T n="letter" /><T n="scissors" />
      </ToolGroup>
    </ToolRow>

    <Main>
      <Navigator>
        <PanelTitle>
          <PanelTitleText>Navigator</PanelTitleText>
          <CapBtn>?</CapBtn><CapBtn>▾</CapBtn><CapBtn>✕</CapBtn>
        </PanelTitle>
        <ProjectTab><Icon name="tree" size={16} />Project</ProjectTab>
        <TreeBox>
          <TreeRow $indent={1}>
            <Expander>–</Expander><ProjectIcon /><TreeLabel>projectname</TreeLabel>
          </TreeRow>
          <TreeRow $indent={19}>
            <Expander>–</Expander><Icon name="tree" size={16} /><TreeLabel>Designs</TreeLabel>
          </TreeRow>
          <TreeRow $indent={37}>
            <Expander>+</Expander><DesignIcon /><TreeLabel $selected>Design1</TreeLabel>
          </TreeRow>
          <TreeRow $indent={21}>
            <TreeStub /><Icon name="blocks" size={16} /><TreeLabel>Blocks</TreeLabel>
          </TreeRow>
        </TreeBox>
        <NavScroll><ScrollArrow><Chevron /></ScrollArrow></NavScroll>
      </Navigator>

      <MidColumn>
        <CanvasFrame><SheetCanvas /></CanvasFrame>
        <BelowCanvas />
      </MidColumn>

      <Properties>
        <PanelTitle>
          <PanelTitleText>Properties</PanelTitleText>
          <CapBtn>?</CapBtn><CapBtn>▾</CapBtn><CapBtn>✕</CapBtn>
        </PanelTitle>
        <PropGrid>
          <PropRow>
            <PropCell $w={100} $pad={23}>Property</PropCell>
            <PropCell $w={100} $pad={23}>Value</PropCell>
            <PropCell $pad={3}>Instance</PropCell>
          </PropRow>
          <PropRow>
            <PropCell $w={100} $pad={23}>Name</PropCell>
            <PropCell $w={100} $pad={23}>Schematic1</PropCell>
            <PropCell $pad={3} />
          </PropRow>
        </PropGrid>
        <PropScroll><HScroll thumb={172} /></PropScroll>
        <DescBox>
          <b>No Item Selected</b>
          Select an item to see its description
        </DescBox>
      </Properties>
    </Main>

    <HSplit $h={10} />

    <OutputPane>
      <OutputRail>
        <RailBtn>✕</RailBtn><RailBtn>▸</RailBtn><RailBtn>?</RailBtn>
        <RailTitle>Output</RailTitle>
      </OutputRail>
      <OutputBody>
        <OutputWhite />
        <TabStrip>
          <TabArrow><svg width="6" height="9"><path d="M5 0v9L0 4.5z" fill="#777" /></svg></TabArrow>
          <TabArrow><svg width="6" height="9"><path d="M1 0v9l5-4.5z" fill="#777" /></svg></TabArrow>
          <OutputTab>Output</OutputTab>
        </TabStrip>
      </OutputBody>
    </OutputPane>

    <HSplit $h={8} />

    <StatusBar>
      <StatusCell $w={386} $pad={1} $tight>For Help, press F1</StatusCell>
      <StatusCell $w={77} $pad={3}>Select</StatusCell>
      <StatusCell $w={123} />
      <StatusCell $w={168} />
      <StatusCell $w={72} $pad={5}>Sheet 1</StatusCell>
      <StatusCell $w={30} />
      <StatusCell $w={21} $pad={4}><Led /></StatusCell>
      <StatusCell $w={58} $pad={4}>Online</StatusCell>
      <StatusCell $pad={3} $tight>Library: C:\OptimumDxEXP_Library\...\DX_Exp_lib\DX_Exp_Lib.lmc</StatusCell>
    </StatusBar>

    <Taskbar>
      <StartBtn><XpFlag />start</StartBtn>
      <TaskButtons>
        <TaskBtn><FolderIcon /><TaskLabel $shift={-3}>Pictures</TaskLabel></TaskBtn>
        <TaskBtn><PaintIcon /><TaskLabel>untitled - Paint</TaskLabel></TaskBtn>
        <TaskBtn $active><AppLogo /><TaskLabel>DxDesigner - C:\Docu...</TaskLabel></TaskBtn>
        <TaskBtn><WordIcon /><TaskLabel>Using Central Library ...</TaskLabel></TaskBtn>
      </TaskButtons>
      <TrayLead><span>Desktop</span><span>»</span></TrayLead>
      <Tray>
        <TrayChevron><svg width="8" height="9"><path d="M5.5 1L2 4.5 5.5 8" fill="none" stroke="#fff" strokeWidth="2" /></svg></TrayChevron>
        3:55 PM
      </Tray>
    </Taskbar>

    <Dialog>
      <DialogTitle>
        <PanelTitleText>Symbols</PanelTitleText>
        <CapBtn>?</CapBtn><CapBtn>✕</CapBtn>
      </DialogTitle>
      <DialogBody>
        <LeftPane>
          <TabRow>
            <DlgTab $active>Part View</DlgTab>
            <DlgTab>Symbol View</DlgTab>
            <DlgTab>Reuse Blocks</DlgTab>
          </TabRow>
          <TabPanel>
            <FilterRow>
              <FilterInput $w={100} />
              <FilterInput $w={139} />
              <FilterInput $w={189} />
              <FilterInput $w={79} />
              <ClearBtn>Clear Filters</ClearBtn>
            </FilterRow>
            <TableRow>
              <SymbolTable>
                <TableHead>
                  <HeadCell $pad={9}>Partition</HeadCell>
                  <HeadCell $pad={10}>Part</HeadCell>
                  <HeadCell $pad={10}>Symbol</HeadCell>
                  <HeadCell $pad={10}>Slot</HeadCell>
                </TableHead>
                <TableRows>
                  {rows.map((r) => (
                    <DataRow key={r[0]}>
                      <PartName>{r[0]}</PartName>
                      <PlusBox>+</PlusBox>
                      <span />
                      <ItalicCell>{r[1]}</ItalicCell>
                      <SymbolCell>{r[2]}</SymbolCell>
                      <SlotCell>unassigned...</SlotCell>
                    </DataRow>
                  ))}
                </TableRows>
                <TableScroll><HScroll thumb={306} /></TableScroll>
              </SymbolTable>
              <SideOptions>
                <CheckLine><CheckBox />Add Nets</CheckLine>
                <CheckLine $disabled><CheckBox $disabled />Add Net Names</CheckLine>
              </SideOptions>
            </TableRow>
          </TabPanel>
        </LeftPane>
        <RightPane>
          <PlaceBtn>Place Symbol</PlaceBtn>
          <Preview><SymbolPreview /></Preview>
          <Combo>
            Symbol IC:AD-ADG465BRM.1
            <ComboArrow><svg width="9" height="7"><path d="M1 1l3.5 3.5L8 1" fill="none" stroke="#24397e" strokeWidth="2" /></svg></ComboArrow>
          </Combo>
        </RightPane>
      </DialogBody>
    </Dialog>
  </Screen>
);

export default App;
